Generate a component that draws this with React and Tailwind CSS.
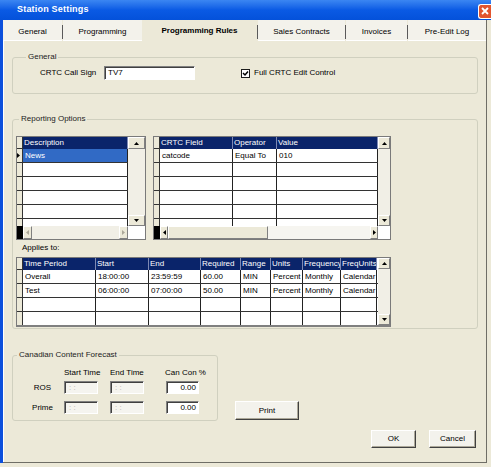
import React from "react";

// column widths for the three grids
const descCols = ["w-[105px]"];
const crtcCols = ["w-[73px]", "w-[44px]", "w-[101px]"];
const applyCols = [
  "w-[73px]", "w-[53px]", "w-[52px]", "w-[40px]",
  "w-[30px]", "w-[32px]", "w-[38px]", "w-[36px]",
];

const applyRows = [
  ["Overall", "18:00:00", "23:59:59", "60.00", "MIN", "Percent", "Monthly", "Calendar"],
  ["Test", "06:00:00", "07:00:00", "50.00", "MIN", "Percent", "Monthly", "Calendar"],
];

function Tri({ dir, color = "#000" }) {
  const d = {
    up: "M0 3 L2.5 0 L5 3Z",
    down: "M0 0 L2.5 3 L5 0Z",
    left: "M3 0 L0 2.5 L3 5Z",
    right: "M0 0 L3 2.5 L0 5Z",
  }[dir];
  const vertical = dir === "up" || dir === "down";
  return (
    <svg width={vertical ? 5 : 3} height={vertical ? 3 : 5} viewBox={vertical ? "0 0 5 3" : "0 0 3 5"}>
      <path d={d} fill={color} />
    </svg>
  );
}

function ScrollBtn({ className = "", children }) {
  return (
    <div
      className={`flex items-center justify-center bg-[#ece9d8] border border-t-white border-l-white border-r-[#808080] border-b-[#808080] ${className}`}
    >
      {children}
    </div>
  );
}

function Table({ cols, headers, rows, nRows, selCell }) {
  return (
    <div className="flex-1 overflow-hidden bg-white">
      <div className="flex h-[12px]">
        <div className="w-[6px] shrink-0 bg-[#ece9d8] border-r border-b border-[#333]" />
        {headers.map((h, i) => (
          <div
            key={i}
            className={`${cols[i]} shrink-0 bg-[#0a246a] text-white pl-[1px] leading-[12px] whitespace-nowrap overflow-hidden border-r border-[#7d89b3]`}
          >
            {h}
          </div>
        ))}
      </div>
      {Array.from({ length: nRows }).map((_, r) => (
        <div key={r} className="flex h-[14px] border-b border-[#333]">
          <div className="w-[6px] shrink-0 bg-[#ece9d8] border-r border-[#333] flex items-center">
            {selCell && r === 0 ? <Tri dir="right" /> : null}
          </div>
          {cols.map((w, c) => {
            const sel = selCell && r === 0 && c === 0;
            return (
              <div
                key={c}
                className={`${w} shrink-0 border-r border-[#222] pl-[2px] leading-[13px] whitespace-nowrap overflow-hidden ${
                  sel ? "bg-[#316ac5] text-white" : ""
                }`}
              >
                {rows[r] ? rows[r][c] : ""}
              </div>
            );
          })}
        </div>
      ))}
    </div>
  );
}

function Field({ className = "", children, disabled }) {
  return (
    <div
      className={`border border-t-[#808080] border-l-[#808080] border-r-white border-b-white shadow-[inset_1px_1px_0_#404040] ${
        disabled ? "bg-[#f5f4ef] text-[#b5b2a8]" : "bg-white"
      } ${className}`}
    >
      {children}
    </div>
  );
}

function Btn({ className = "", children }) {
  return (
    <div
      className={`flex items-center justify-center bg-[#f3f2ec] border border-t-white border-l-white border-r-[#404040] border-b-[#404040] shadow-[inset_-1px_-1px_0_#aca899] ${className}`}
    >
      {children}
    </div>
  );
}

function Legend({ className = "", children }) {
  return <legend className={`px-[2px] leading-[10px] text-[#222] ${className}`}>{children}</legend>;
}

function Sep() {
  return <div className="w-[1px] h-[14px] self-center mt-[2px] bg-[#5a5a5a]" />;
}

export default function App() {
  return (
    <div className="w-[491px] h-[467px] bg-[#ece9d8] overflow-hidden font-['Liberation_Sans',Arial,sans-serif] text-[8px] text-black">
      {/* title bar */}
      <div className="h-[20px] flex items-center bg-linear-to-b from-[#3b86f2] via-[#0a5ae4] to-[#0451da] pl-[17px]">
        <span className="text-white font-bold text-[9px] tracking-[0.2px]">Station Settings</span>
        <div className="ml-auto w-[13px] h-[15px] mt-[2px] rounded-l-[3px] border border-r-0 border-white bg-[#e2552f] flex items-center justify-center">
          <svg width="8" height="8" viewBox="0 0 8 8">
            <path d="M1 1 L7 7 M7 1 L1 7" stroke="#fff" strokeWidth="1.8" />
          </svg>
        </div>
      </div>

      <div className="flex h-[443px]">
        <div className="w-[3px] bg-[#0c50dc]" />
        <div className="w-[484px] flex flex-col border-r border-b border-[#6f6e66]">
          {/* tabs */}
          <div className="flex h-[21px]">
            <div className="w-[59px] bg-[#f3f2eb] border-b border-white flex items-center justify-center pt-[3px]">General</div>
            <Sep />
            <div className="w-[79px] bg-[#f3f2eb] border-b border-white flex items-center justify-center pt-[3px]">Programming</div>
            <div className="w-[115px] flex items-center justify-center font-bold">Programming Rules</div>
            <Sep />
            <div className="w-[87px] bg-[#f3f2eb] border-b border-white flex items-center justify-center pt-[3px]">Sales Contracts</div>
            <Sep />
            <div className="w-[61px] bg-[#f3f2eb] border-b border-white flex items-center justify-center pt-[3px]">Invoices</div>
            <Sep />
            <div className="w-[78px] bg-[#f3f2eb] border-b border-white flex items-center justify-center pt-[3px]">Pre-Edit Log</div>
          </div>

          {/* page */}
          <div className="flex-1 flex flex-col border-l border-white px-[8px]">
            <fieldset className="mt-[11px] border border-[#d0d0bf] rounded-[3px]">
              <Legend className="ml-[13px]">General</Legend>
              <div className="flex items-center pl-[27px] pt-[4px] pb-[13px]">
                <span className="w-[64px]">CRTC Call Sign</span>
                <Field className="w-[91px] h-[14px] pl-[3px] leading-[12px]">TV7</Field>
                <div className="ml-[46px] w-[9px] h-[9px] bg-white border border-[#1c1c1c] flex items-center justify-center">
                  <svg width="7" height="7" viewBox="0 0 7 7">
                    <path d="M1 3 L3 5 L6 1.5" stroke="#000" strokeWidth="1.5" fill="none" />
                  </svg>
                </div>
                <span className="ml-[4px]">Full CRTC Edit Control</span>
              </div>
            </fieldset>

            <fieldset className="mt-[20px] border border-[#d0d0bf] rounded-[3px]">
              <Legend className="ml-[6px]">Reporting Options</Legend>
              <div className="pl-[3px] pt-[12px] pb-[1px]">
                <div className="flex gap-[7px]">
                  {/* description grid */}
                  <div className="w-[130px] h-[104px] border border-[#7a7a7a] flex flex-col">
                    <div className="flex h-[89px]">
                      <Table cols={descCols} headers={["Description"]} rows={[["News"]]} nRows={6} selCell />
                      <div className="w-[17px] bg-[#f1efe6] flex flex-col justify-between">
                        <ScrollBtn className="h-[12px]"><Tri dir="up" /></ScrollBtn>
                        <ScrollBtn className="h-[11px]"><Tri dir="down" /></ScrollBtn>
                      </div>
                    </div>
                    <div className="flex h-[13px]">
                      <div className="w-[6px] bg-black" />
                      <div className="w-[105px] bg-[#f1efe6] flex justify-between">
                        <ScrollBtn className="w-[9px]"><Tri dir="left" color="#aca899" /></ScrollBtn>
                        <ScrollBtn className="w-[9px]"><Tri dir="right" color="#aca899" /></ScrollBtn>
                      </div>
                      <div className="w-[17px] bg-white" />
                    </div>
                  </div>

                  {/* crtc field grid */}
                  <div className="w-[238px] h-[104px] border border-[#7a7a7a] flex flex-col">
                    <div className="flex h-[89px]">
                      <Table
                        cols={crtcCols}
                        headers={["CRTC Field", "Operator", "Value"]}
                        rows={[["catcode", "Equal To", "010"]]}
                        nRows={6}
                      />
                      <div className="w-[12px] bg-[#f1efe6] flex flex-col justify-between">
                        <ScrollBtn className="h-[12px]"><Tri dir="up" /></ScrollBtn>
                        <ScrollBtn className="h-[11px]"><Tri dir="down" /></ScrollBtn>
                      </div>
                    </div>
                    <div className="flex h-[13px]">
                      <div className="w-[6px] bg-black" />
                      <div className="w-[218px] bg-[#f6f5f0] flex">
                        <ScrollBtn className="w-[8px]"><Tri dir="left" /></ScrollBtn>
                        <ScrollBtn className="w-[100px]" />
                        <ScrollBtn className="w-[8px] ml-auto"><Tri dir="right" /></ScrollBtn>
                      </div>
                      <div className="w-[12px] bg-white" />
                    </div>
                  </div>
                </div>

                <div className="mt-[3px] mb-[4px] pl-[6px] leading-[10px]">Applies to:</div>

                {/* applies grid */}
                <div className="w-[375px] h-[70px] border border-[#7a7a7a] border-b-2 border-b-[#808080] flex">
                  <Table
                    cols={applyCols}
                    headers={["Time Period", "Start", "End", "Required", "Range", "Units", "Frequency", "FreqUnits"]}
                    rows={applyRows}
                    nRows={4}
                  />
                  <div className="w-[12px] bg-[#f1efe6] flex flex-col justify-between">
                    <ScrollBtn className="h-[11px]"><Tri dir="up" /></ScrollBtn>
                    <ScrollBtn className="h-[11px]"><Tri dir="down" /></ScrollBtn>
                  </div>
                </div>
              </div>
            </fieldset>

            <div className="flex items-end mt-[21px]">
              <fieldset className="w-[206px] border border-[#d0d0bf] rounded-[3px]">
                <Legend className="ml-[4px]">Canadian Content Forecast</Legend>
                <div className="pt-[8px] pb-[6px]">
                  <div className="flex h-[10px] leading-[10px]">
                    <span className="ml-[51px] w-[46px]">Start Time</span>
                    <span className="w-[55px]">End Time</span>
                    <span>Can Con %</span>
                  </div>
                  <div className="flex items-center h-[13px] mt-[3px]">
                    <span className="ml-[13px] w-[33px] text-center">ROS</span>
                    <Field disabled className="ml-[5px] w-[34px] h-[13px] pl-[4px] leading-[11px]">: :</Field>
                    <Field disabled className="ml-[12px] w-[34px] h-[13px] pl-[4px] leading-[11px]">: :</Field>
                    <Field className="ml-[22px] w-[33px] h-[13px] pr-[2px] text-right leading-[11px]">0.00</Field>
                  </div>
                  <div className="flex items-center h-[13px] mt-[7px]">
                    <span className="ml-[13px] w-[33px] text-center">Prime</span>
                    <Field disabled className="ml-[5px] w-[34px] h-[13px] pl-[4px] leading-[11px]">: :</Field>
                    <Field disabled className="ml-[12px] w-[34px] h-[13px] pl-[4px] leading-[11px]">: :</Field>
                    <Field className="ml-[22px] w-[33px] h-[13px] pr-[2px] text-right leading-[11px]">0.00</Field>
                  </div>
                </div>
              </fieldset>
              <Btn className="ml-[17px] mb-[1px] w-[64px] h-[19px]">Print</Btn>
            </div>

            <div className="flex justify-end gap-[13px] pr-[2px] mt-[9px]">
              <Btn className="w-[45px] h-[18px]">OK</Btn>
              <Btn className="w-[47px] h-[18px]">Cancel</Btn>
            </div>
          </div>
        </div>
      </div>
    </div>
  );
}
